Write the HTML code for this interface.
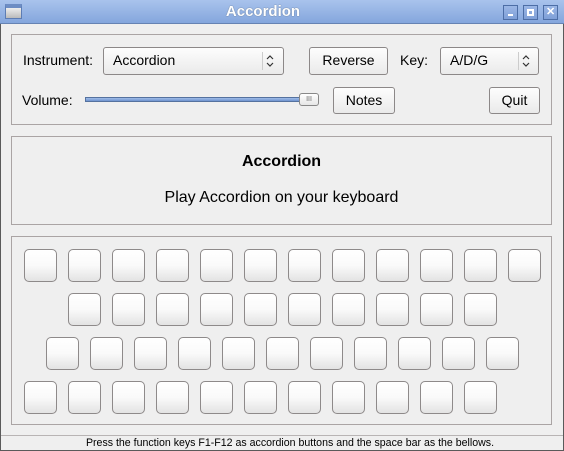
<!DOCTYPE html>
<html><head><style>
*{margin:0;padding:0;box-sizing:border-box}
body{width:564px;height:451px;background:#efefef;font-family:"Liberation Sans",sans-serif;position:relative;overflow:hidden;color:#000}
.a{position:absolute}
#win{left:0;top:0;width:564px;height:451px;border:1px solid #5a5a5a;border-top:none}
#title{left:0;top:0;width:564px;height:24px;background:linear-gradient(#a9c3ec,#84a6dd);border-bottom:1px solid #6683b3}
#title .t{left:163px;width:200px;top:3px;text-align:center;color:#fff;font-weight:bold;font-size:15px;text-shadow:0 0 1px #456}
.wb{top:5px;width:15px;height:15px;border:1px solid #4d6ea6;background:linear-gradient(#9bb7e6,#7f9fd7)}
.frame{border:1px solid #aaa4a4;}
.btn{border:1px solid #8c8888;border-radius:3px;background:linear-gradient(#fdfdfd,#eaeaea);font-size:14px;text-align:center;line-height:25px}
.lbl{font-size:14px}
.key{width:33px;height:33px;border:1px solid #8e8a8a;border-radius:5px;background:linear-gradient(#fff 0%,#fafafa 50%,#e3e3e3 100%)}
</style></head><body>
<div class="a" id="win"></div>
<div class="a" id="title">
 <div class="a" style="left:5px;top:4px;width:17px;height:15px;border:1px solid #5d7db4;background:linear-gradient(#eee,#bbb);border-top:4px solid #6d8dc4"></div>
 <div class="a t">Accordion</div>
 <div class="a wb" style="left:503px"><div class="a" style="left:4px;top:8px;width:5px;height:2px;background:#fff"></div></div>
 <div class="a wb" style="left:523px"><div class="a" style="left:3px;top:3px;width:7px;height:7px;border:2px solid #fff"></div></div>
 <div class="a wb" style="left:543px"><div class="a" style="left:2px;top:-1px;color:#fff;font-size:11px;font-weight:bold">✕</div></div>
</div>

<div class="a frame" style="left:11px;top:34px;width:541px;height:91px"></div>
<div class="a lbl" style="left:23px;top:52px">Instrument:</div>
<div class="a btn" style="left:103px;top:47px;width:181px;height:28px;text-align:left;padding-left:9px">Accordion
 <div class="a" style="left:158px;top:4px;height:18px;border-left:1px solid #ccc"></div>
 <svg class="a" style="left:162px;top:6px" width="8" height="14"><path d="M1 5 L4 2 L7 5 M1 9 L4 12 L7 9" stroke="#333" fill="none" stroke-width="1.2"/></svg></div>
<div class="a btn" style="left:309px;top:47px;width:79px;height:28px">Reverse</div>
<div class="a lbl" style="left:400px;top:52px">Key:</div>
<div class="a btn" style="left:440px;top:47px;width:99px;height:28px;text-align:left;padding-left:9px">A/D/G
 <div class="a" style="left:77px;top:4px;height:18px;border-left:1px solid #ccc"></div>
 <svg class="a" style="left:81px;top:6px" width="8" height="14"><path d="M1 5 L4 2 L7 5 M1 9 L4 12 L7 9" stroke="#333" fill="none" stroke-width="1.2"/></svg></div>
<div class="a lbl" style="left:22px;top:92px">Volume:</div>
<div class="a" style="left:85px;top:97px;width:216px;height:5px;border:1px solid #55729f;background:linear-gradient(#9fbce8,#6f93cf)"></div>
<div class="a" style="left:299px;top:93px;width:20px;height:13px;border:1px solid #888;border-radius:3px;background:linear-gradient(#fff,#e6e6e6);font-size:7px;text-align:center;line-height:11px;color:#666">III</div>
<div class="a btn" style="left:333px;top:87px;width:62px;height:27px">Notes</div>
<div class="a btn" style="left:489px;top:87px;width:51px;height:27px">Quit</div>

<div class="a frame" style="left:11px;top:136px;width:541px;height:89px"></div>
<div class="a" style="left:11px;width:541px;top:153px;text-align:center;font-weight:bold;font-size:16px">Accordion</div>
<div class="a" style="left:11px;width:541px;top:189px;text-align:center;font-size:16px">Play Accordion on your keyboard</div>

<div class="a frame" style="left:11px;top:236px;width:541px;height:189px"></div>
<div id="keys"></div>

<div class="a" style="left:1px;top:435px;width:562px;border-top:1px solid #b8b4b4"></div>
<div class="a" style="left:8px;width:564px;top:437px;text-align:center;font-size:10.6px">Press the function keys F1-F12 as accordion buttons and the space bar as the bellows.</div>
<script>
var rows=[[24,249,12],[68,293,10],[46,337,11],[24,381,11]],h='';
rows.forEach(function(r){for(var i=0;i<r[2];i++)h+='<div class="a key" style="left:'+(r[0]+i*44)+'px;top:'+r[1]+'px"></div>';});
document.getElementById('keys').outerHTML=h;
</script>
</body></html>
